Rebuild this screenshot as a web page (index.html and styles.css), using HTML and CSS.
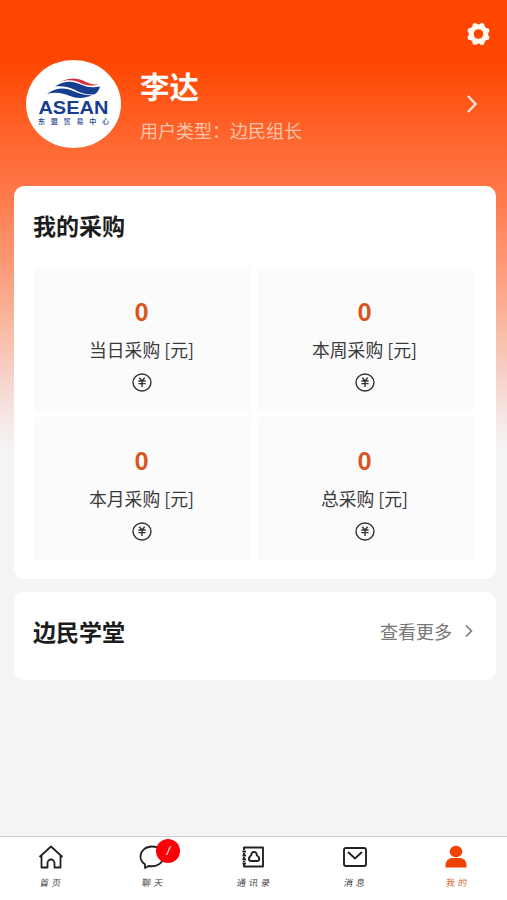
FILE: index.html
```html
<!DOCTYPE html>
<html lang="zh-CN">
<head>
<meta charset="utf-8">
<title>我的</title>
<link rel="stylesheet" href="styles.css">
</head>
<body>
<svg class="defs" aria-hidden="true">
  <symbol id="yen" viewBox="0 0 20 19"><g fill="none" stroke="#333" stroke-width="1.4"><ellipse cx="10" cy="9.5" rx="9" ry="8.5"/><path d="M7.3 4.8 10 8l2.7-3.2M6.4 8h7.2M6.4 10.6h7.2M10 8v6"/></g></symbol>
</svg>
<div class="app">
  <header class="header">
    <svg class="gear" viewBox="0 0 24 24"><g fill="none" stroke="#fffaf2"><circle cx="12" cy="12" r="7.300" stroke-width="5"/><g stroke-width="5" stroke-linecap="round"><path d="M8.500 3.600v0M15.500 3.600v0M20.400 8.500v0M20.400 15.500v0M15.500 20.400v0M8.500 20.400v0M3.600 15.500v0M3.600 8.500v0"/></g></g></svg>
    <div class="profile">
      <div class="avatar">
        <svg class="flag" viewBox="0 0 56 20"><path d="M15 3.500C24-1 32 0 38 3S47 6.500 53 6.500C47 8.500 40 7.500 35 5.200S24 1 15 3.500Z" fill="#d3333f"/><path d="M9 8.500C19 2 27 3 35 6.500S47 9.500 54 8.500c-1 4-3 6.500-6 8-8 .5-14-2-19-4.500S17 7.500 9 8.500Z" fill="#173f91"/><path d="M1 16C10 9 19 9.500 26 12.500s14 5 20 4.700C38 21 30 20.500 24 18S10 13.500 1 16Z" fill="#173f91"/></svg>
        <div class="brand">ASEAN</div>
        <div class="brand-sub"><span>东</span><span>盟</span><span>贸</span><span>易</span><span>中</span><span>心</span></div>
      </div>
      <div class="who">
        <h1>李达</h1>
        <p>用户类型：边民组长</p>
      </div>
      <svg class="go" viewBox="0 0 12 20"><path d="m2 2 7.500 8L2 18" fill="none" stroke="#ffe0d2" stroke-width="2.500"/></svg>
    </div>
  </header>
  <main>
    <section class="card purchases">
      <h2>我的采购</h2>
      <div class="grid">
        <div class="cell"><b>0</b><span>当日采购 [元]</span><svg><use href="#yen"/></svg></div>
        <div class="cell"><b>0</b><span>本周采购 [元]</span><svg><use href="#yen"/></svg></div>
        <div class="cell"><b>0</b><span>本月采购 [元]</span><svg><use href="#yen"/></svg></div>
        <div class="cell"><b>0</b><span>总采购 [元]</span><svg><use href="#yen"/></svg></div>
      </div>
    </section>
    <section class="card school">
      <h2>边民学堂</h2>
      <a class="more">查看更多<svg viewBox="0 0 8 14"><path d="m1 1.500 5.500 5.500L1 12.500" fill="none" stroke="#777" stroke-width="1.600"/></svg></a>
    </section>
  </main>
  <nav class="tabs">
    <a><svg viewBox="0 0 26 24"><path d="M1.500 12 13 1.500 24.500 12M3.500 10.500V22.500H9.500V18a3.500 3.500 0 0 1 7 0v4.500h6V10.500" fill="none" stroke="#222" stroke-width="1.800" stroke-linejoin="round"/></svg><span>首页</span></a>
    <a><svg viewBox="0 0 26 24"><path d="M13 1.500C6.500 1.500 1.500 5.800 1.500 11.500c0 3.300 1.500 6 4.500 7.700V23l3.500-2c8 1.300 15-3 15-9.500S19.500 1.500 13 1.500Z" fill="none" stroke="#222" stroke-width="1.800" stroke-linejoin="round"/></svg><i class="badge">/</i><span>聊天</span></a>
    <a><svg viewBox="0 0 26 24"><path d="M4 5V2.500h19v19H4V19M4 8v1.500M4 12v1.500M4 16v1M2.500 6.500H6M2.500 10.500H6M2.500 14.500H6M2.500 18.500H6M14 7c-2 0-3 1.500-2.700 3.300C9.500 11.500 9 13 9 14c0 1.500.8 2 2 2h6.200c1.300 0 2-.7 2-2 0-1.200-.9-2.700-2.500-3.700C17 8.500 16 7 14 7Z" fill="none" stroke="#222" stroke-width="1.900" stroke-linejoin="round"/></svg><span>通讯录</span></a>
    <a><svg viewBox="0 0 26 24"><rect x="2" y="3" width="22" height="18" rx="2" fill="none" stroke="#222" stroke-width="1.900"/><path d="m6 7 7 6.500L20 7" fill="none" stroke="#222" stroke-width="1.900"/></svg><span>消息</span></a>
    <a class="active"><svg viewBox="0 0 26 24"><ellipse cx="13" cy="6.500" rx="6.300" ry="5.700" fill="#f04404"/><path d="M2.500 22.500v-2.500c0-4.500 4-7 7-7h7c3.500 0 7 2.500 7 7v2.500Z" fill="#f04404"/></svg><span>我的</span></a>
  </nav>
</div>
</body>
</html>
```
FILE: styles.css
```css
* { box-sizing: border-box; }
body {
  margin: 0;
  font-family: "Noto Sans CJK SC", "Noto Sans", sans-serif;
  color: #1c1c1c;
}
h1, h2, p { margin: 0; }
svg { display: block; flex: none; }
.defs { display: none; }
.app {
  height: 900px;
  display: flex;
  flex-direction: column;
  background: linear-gradient(#ff4600 0, #ff4600 60px, #ff6a35 150px, #ff7b4c 200px, #fc9c7b 270px, #f8c0aa 340px, #f7d0c8 375px, #f5e8e4 420px, #f4f4f4 450px);
}
.header { height: 186px; padding: 22px 16px 0 26px; }
.gear { width: 25px; height: 24px; margin-left: auto; }
.profile { display: flex; margin-top: 14px; }
.avatar {
  width: 95px;
  height: 88px;
  border-radius: 50%;
  background: #fff;
  display: flex;
  flex-direction: column;
  align-items: center;
  padding-top: 18px;
  color: #173f91;
}
.flag { width: 56px; height: 20px; }
.brand {
  font: bold 18.500px/14px "Liberation Sans", sans-serif;
  height: 14px;
  margin-top: 3px;
  transform: scaleX(1.08);
}
.brand-sub {
  width: 71px;
  display: flex;
  justify-content: space-between;
  font-size: 7px;
  line-height: 8px;
  margin-top: 2px;
  font-weight: 500;
}
.who { margin-left: 19px; flex: 1; color: #fff; }
.who h1 { font-size: 29.500px; line-height: 40px; font-weight: 700; margin-top: 5px; }
.who p { font-size: 18px; line-height: 24px; margin-top: 13px; color: #ffc3aa; }
.go { width: 12px; height: 20px; margin: 34px 13px 0 0; }
main { flex: 1; padding: 0 11px 0 14px; }
.card { background: #fff; border-radius: 10px; }
.card h2 { font-size: 23px; line-height: 32px; font-weight: 700; margin-left: -1px; }
.purchases { height: 393px; padding: 23px 20px 0; }
.grid {
  display: grid;
  grid-template-columns: 217px 217px;
  grid-template-rows: 144px 144px;
  gap: 5px 6px;
  margin-top: 27px;
}
.cell {
  background: #fbfbfc;
  border-radius: 3px;
  display: flex;
  flex-direction: column;
  align-items: center;
  padding-right: 2px;
}
.cell b { font-size: 24px; line-height: 30px; font-weight: 700; color: #d9541e; margin-top: 28px; }
.cell span { font-size: 17.800px; line-height: 24px; margin-top: 11px; color: #3a3a3a; white-space: nowrap; }
.cell svg { width: 20px; height: 19px; margin-top: 12px; }
.school {
  height: 88px;
  margin-top: 13px;
  padding: 0 23px 10px 20px;
  display: flex;
  justify-content: space-between;
  align-items: center;
}
.more { display: flex; align-items: center; font-size: 18px; line-height: 26px; color: #777; }
.more svg { width: 8px; height: 14px; margin-left: 13px; }
.tabs {
  height: 64px;
  display: grid;
  grid-template-columns: repeat(5, 1fr);
  background: #fff;
  border-top: 1px solid #cfcfcf;
}
.tabs a {
  position: relative;
  display: flex;
  flex-direction: column;
  align-items: center;
  padding-top: 8px;
}
.tabs svg { width: 26px; height: 24px; }
.tabs span {
  font-size: 9px;
  line-height: 12px;
  letter-spacing: 3px;
  margin: 8px -3px 0 0;
  color: #444;
  transform: skewX(-8deg);
}
.tabs .active span { color: #d4662f; }
.badge {
  position: absolute;
  left: 55px;
  top: 2px;
  width: 24px;
  height: 24px;
  border-radius: 50%;
  background: #fb0007;
  color: #fff;
  font: italic 12px/24px "Liberation Sans", sans-serif;
  text-align: center;
}
```
